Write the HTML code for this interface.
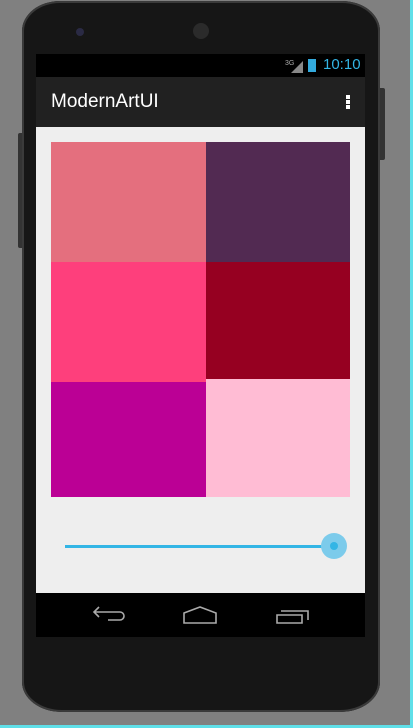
<!DOCTYPE html>
<html><head><style>
body{margin:0;width:413px;height:728px;background:#808080;position:relative;overflow:hidden;font-family:"Liberation Sans",sans-serif}
.a{position:absolute}
</style></head><body>
<div class="a" style="right:0;top:0;width:3px;height:728px;background:#5fdfe8"></div>
<div class="a" style="left:0;bottom:0;width:413px;height:3px;background:#5fdfe8"></div>
<div class="a" style="left:18px;top:133px;width:6px;height:115px;background:#333;border-radius:2px"></div>
<div class="a" style="left:378px;top:88px;width:7px;height:72px;background:#333;border-radius:2px"></div>
<div class="a" style="left:22px;top:1px;width:358px;height:711px;background:#161616;border-radius:38px 38px 40px 40px / 30px 30px 30px 30px;box-shadow:inset 0 0 0 2px #3a3a3a"></div>
<div class="a" style="left:76px;top:28px;width:8px;height:8px;border-radius:50%;background:#2a2a44"></div>
<div class="a" style="left:193px;top:23px;width:16px;height:16px;border-radius:50%;background:#2b2b2b"></div>
<div class="a" style="left:36px;top:54px;width:329px;height:23px;background:#000"></div>
<svg class="a" style="left:285px;top:58px" width="20" height="16"><text x="0" y="7" font-size="7" fill="#aaa" font-family="Liberation Sans">3G</text><polygon points="6,15 18,3 18,15" fill="#888"/></svg>
<div class="a" style="left:308px;top:59px;width:8px;height:13px;background:#33aadd"></div>
<div class="a" style="left:323px;top:56px;font-size:15px;color:#33b5e5">10:10</div>
<div class="a" style="left:36px;top:77px;width:329px;height:50px;background:#212121"></div>
<div class="a" style="left:51px;top:91px;font-size:19px;color:#fff">ModernArtUI</div>
<div class="a" style="left:346px;top:95px;width:4px;height:4px;background:#fff;box-shadow:0 5px 0 #fff,0 10px 0 #fff"></div>
<div class="a" style="left:36px;top:127px;width:329px;height:466px;background:#eeeeee"></div>
<div class="a" style="left:51px;top:142px;width:155px;height:120px;background:#e46f7e"></div>
<div class="a" style="left:206px;top:142px;width:144px;height:120px;background:#522a52"></div>
<div class="a" style="left:51px;top:262px;width:155px;height:120px;background:#fe3f7c"></div>
<div class="a" style="left:206px;top:262px;width:144px;height:117px;background:#960021"></div>
<div class="a" style="left:51px;top:382px;width:155px;height:115px;background:#bb0095"></div>
<div class="a" style="left:206px;top:379px;width:144px;height:118px;background:#ffbcd4"></div>
<div class="a" style="left:65px;top:545px;width:270px;height:3px;background:#33b5e5"></div>
<div class="a" style="left:321px;top:533px;width:26px;height:26px;border-radius:50%;background:#7ccbeb"></div>
<div class="a" style="left:330px;top:542px;width:8px;height:8px;border-radius:50%;background:#33b5e5"></div>
<div class="a" style="left:36px;top:593px;width:329px;height:44px;background:#000"></div>
<svg class="a" style="left:36px;top:593px" width="329" height="44" fill="none" stroke="#aaa" stroke-width="1.6">
<path d="M63 14 L58 19 L63 24 M58 19 H84 a4 4 0 0 1 0 8 H72"/>
<path d="M148 20 L164 14 L180 20 V30 H148 Z"/>
<path d="M241 22 H266 V30 H241 Z M245 18 H272 V27"/>
</svg>
</body></html>
